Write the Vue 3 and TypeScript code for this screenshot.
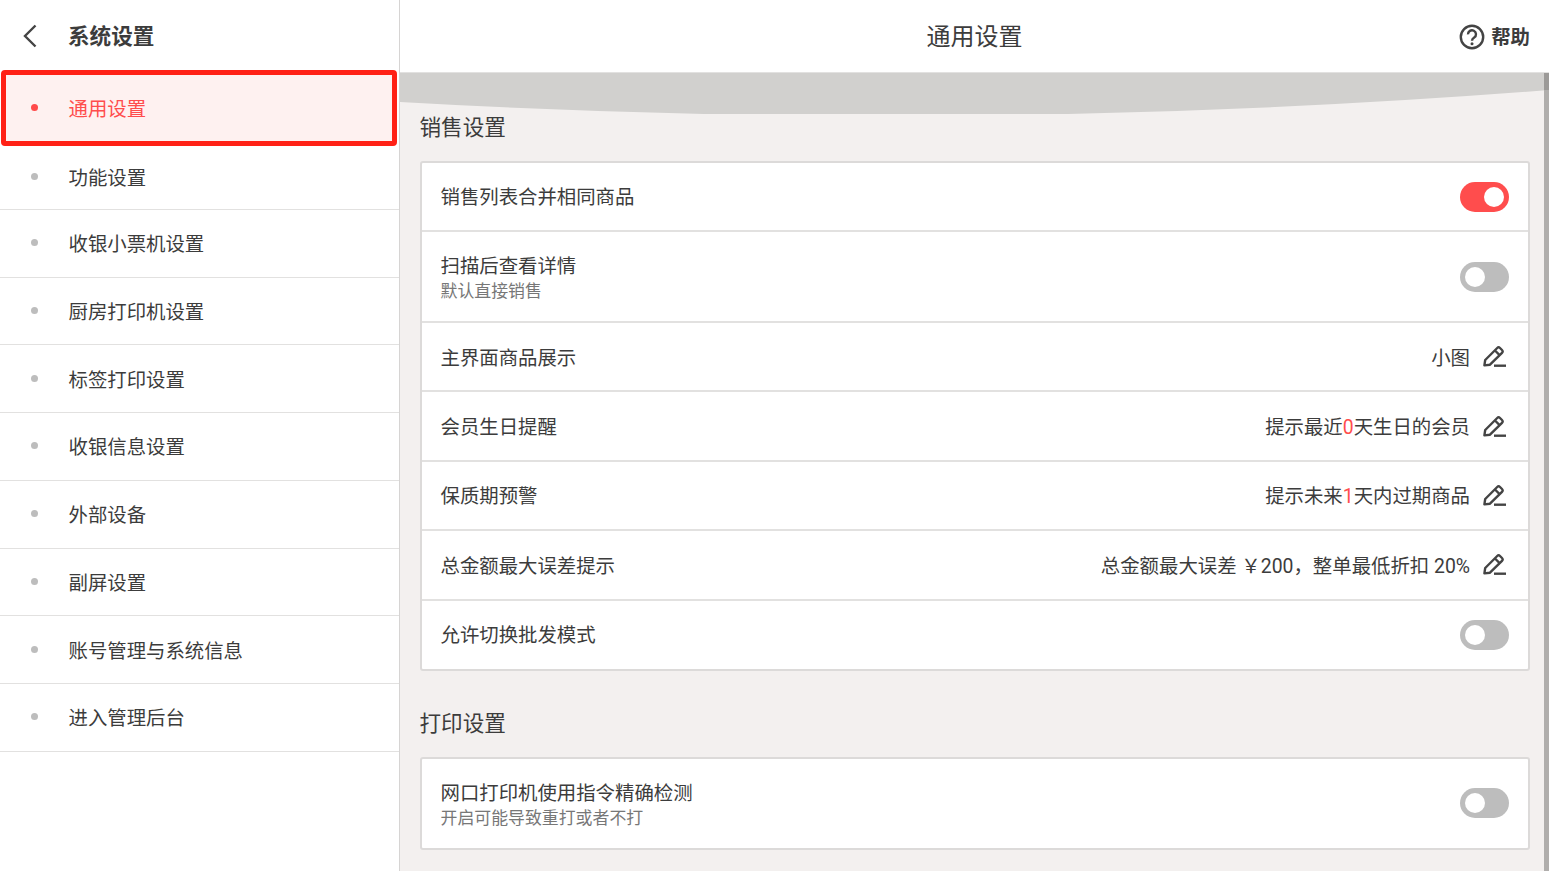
<script setup lang="ts">
interface NavItem { label: string; active?: boolean }
const nav: NavItem[] = [
  { label: '通用设置', active: true },
  { label: '功能设置' },
  { label: '收银小票机设置' },
  { label: '厨房打印机设置' },
  { label: '标签打印设置' },
  { label: '收银信息设置' },
  { label: '外部设备' },
  { label: '副屏设置' },
  { label: '账号管理与系统信息' },
  { label: '进入管理后台' },
]
</script>

<template>
  <div class="app">
    <aside class="side">
      <div class="side-head">
        <svg class="back" width="16" height="24" viewBox="0 0 16 24"><path d="M13.5 1.5 3 12l10.5 10.5" fill="none" stroke="#444" stroke-width="2.4"/></svg>
        <span class="side-title">系统设置</span>
      </div>
      <ul class="nav">
        <li v-for="n in nav" :key="n.label" class="nav-item" :class="{ active: n.active }">
          <i class="dot"></i><span>{{ n.label }}</span>
        </li>
      </ul>
    </aside>
    <main class="main">
      <header class="top">
        <span class="top-title">通用设置</span>
        <span class="help">
          <svg width="26" height="26" viewBox="0 0 26 26"><circle cx="13" cy="13" r="11.2" fill="none" stroke="#444" stroke-width="2.4"/><path d="M9 10.4a4 4 0 1 1 6.2 3.2c-1.5 1-2.2 1.7-2.2 3.2" fill="none" stroke="#444" stroke-width="2.4"/><circle cx="13" cy="19.7" r="1.5" fill="#444"/></svg>
          帮助
        </span>
      </header>
      <div class="body">
        <svg class="glow" viewBox="0 0 1149 41" preserveAspectRatio="none"><path d="M0 0H1149V17Q574 62 0 29Z" fill="#d1d0ce"/></svg>
        <i class="bar"></i>
        <h2 class="sec first">销售设置</h2>
        <section class="card">
          <div class="row first-row"><span>销售列表合并相同商品</span><i class="sw on"></i></div>
          <div class="row r91"><div><div>扫描后查看详情</div><div class="sub">默认直接销售</div></div><i class="sw"></i></div>
          <div class="row r69"><span>主界面商品展示</span><div class="val"><span>小图</span><svg class="pen" width="23" height="21" viewBox="0 0 23 21"><path d="M1.4 19.4 2.2 14 14.2 2a2 2 0 0 1 2.8 0l2 2a2 2 0 0 1 0 2.8L7 18.7Z M12 4.5l4.6 4.6" fill="none" stroke="#444" stroke-width="2.4" stroke-linejoin="round"/><path d="M11 19.7h12" stroke="#444" stroke-width="2.4"/></svg></div></div>
          <div class="row r69"><span>会员生日提醒</span><div class="val"><span>提示最近<em>0</em>天生日的会员</span><svg class="pen" width="23" height="21" viewBox="0 0 23 21"><path d="M1.4 19.4 2.2 14 14.2 2a2 2 0 0 1 2.8 0l2 2a2 2 0 0 1 0 2.8L7 18.7Z M12 4.5l4.6 4.6" fill="none" stroke="#444" stroke-width="2.4" stroke-linejoin="round"/><path d="M11 19.7h12" stroke="#444" stroke-width="2.4"/></svg></div></div>
          <div class="row r69"><span>保质期预警</span><div class="val"><span>提示未来<em>1</em>天内过期商品</span><svg class="pen" width="23" height="21" viewBox="0 0 23 21"><path d="M1.4 19.4 2.2 14 14.2 2a2 2 0 0 1 2.8 0l2 2a2 2 0 0 1 0 2.8L7 18.7Z M12 4.5l4.6 4.6" fill="none" stroke="#444" stroke-width="2.4" stroke-linejoin="round"/><path d="M11 19.7h12" stroke="#444" stroke-width="2.4"/></svg></div></div>
          <div class="row r70"><span>总金额最大误差提示</span><div class="val"><span>总金额最大误差 ￥200，整单最低折扣 20%</span><svg class="pen" width="23" height="21" viewBox="0 0 23 21"><path d="M1.4 19.4 2.2 14 14.2 2a2 2 0 0 1 2.8 0l2 2a2 2 0 0 1 0 2.8L7 18.7Z M12 4.5l4.6 4.6" fill="none" stroke="#444" stroke-width="2.4" stroke-linejoin="round"/><path d="M11 19.7h12" stroke="#444" stroke-width="2.4"/></svg></div></div>
          <div class="row last-row"><span>允许切换批发模式</span><i class="sw"></i></div>
        </section>
        <h2 class="sec second">打印设置</h2>
        <section class="card">
          <div class="row r90"><div><div>网口打印机使用指令精确检测</div><div class="sub">开启可能导致重打或者不打</div></div><i class="sw"></i></div>
        </section>
      </div>
    </main>
  </div>
</template>

<style>
html, body { margin: 0; height: 100%; overflow: hidden; }
</style>

<style scoped>
.app { display: flex; height: 871px; width: 1549px; overflow: hidden; background: #fff; color: #3c3c3c; font-family: Roboto, "Noto Sans CJK SC", "Noto Sans", sans-serif; }
.side { width: 400px; flex: none; box-sizing: border-box; border-right: 1px solid #d6d4d3; background: #fff; }
.side-head { height: 72px; box-sizing: border-box; display: flex; align-items: center; padding: 0 0 3px 22px; }
.back { flex: none; margin-top: 3px; }
.side-title { margin-left: 30px; font-size: 21.6px; font-weight: 700; color: #3c3c3c; }
.nav { list-style: none; margin: 0; padding: 0; }
.nav-item { height: 67.75px; box-sizing: border-box; display: flex; align-items: center; padding: 0 0 1px 31px; border-bottom: 1px solid #e2e1e0; font-size: 19.4px; }
.dot { width: 7px; height: 7px; border-radius: 50%; background: #bdbdbd; margin-right: 30.5px; }
.nav-item.active { height: 76px; margin: -2px 2px 0 1px; padding: 0 0 2px 25px; background: #fef1f0; color: #ff4d4d; border: 5px solid #ff2116; border-radius: 4px; }
.nav-item.active .dot { background: #ff4a4a; margin-right: 30.5px; }
.nav-item.active + .nav-item { height: 63.75px; padding-bottom: 2px; }
.main { flex: 1; min-width: 0; display: flex; flex-direction: column; }
.top { height: 73px; flex: none; display: flex; align-items: center; justify-content: center; position: relative; background: #fff; border-bottom: 1px solid #e2e1e0; box-sizing: border-box; padding-bottom: 3px; }
.top-title { font-size: 24px; color: #3c3c3c; }
.help { position: absolute; right: 19px; top: 21px; display: flex; align-items: center; gap: 6px; font-size: 19.4px; font-weight: 700; }
.help svg { margin-top: 2px; }
.body { flex: 1; position: relative; background: #f3f0ef; padding: 0 19px 0 20px; overflow: hidden; }
.glow { position: absolute; left: 0; top: 0; width: 100%; height: 41px; }
.bar { position: absolute; right: 0; top: 0; width: 5px; height: 100%; background: linear-gradient(#9c9a98 17px, #b0aeac 17px); }
.sec { position: relative; margin: 0 0 0 -0.5px; font-weight: 400; font-size: 21.6px; line-height: 32px; color: #3c3c3c; box-sizing: content-box; }
.sec.first { padding-top: 39px; height: 49px; }
.sec.second { padding-top: 37px; height: 48.6px; }
.card { background: #fff; border: 2px solid #dcdad9; border-radius: 3px; position: relative; box-sizing: border-box; }
.row { display: flex; align-items: center; justify-content: space-between; padding: 0 19px 0 18.5px; box-sizing: border-box; font-size: 19.4px; line-height: 26px; border-bottom: 2px solid #e2e1e0; }
.row > span, .row > div:first-child, .val > span { padding-top: 4px; }
.row:last-child { border-bottom: 0; }
.r69 { height: 69.4px; }
.r70 { height: 69.6px; }
.first-row { height: 69px; }
.first-row > span { padding-top: 2px; }
.last-row { height: 68.4px; }
.last-row > span { padding-top: 2px; }
.r90 { height: 89px; }
.r91 { height: 91px; }
.sub { font-size: 16.9px; line-height: 23px; color: #777; }
.val { display: flex; align-items: center; }
.val em { font-style: normal; color: #ff4d4d; }
.pen { margin: 0 3px 0 13px; }
.sw { display: block; width: 49px; height: 30px; border-radius: 15px; background: #bdbdbd; position: relative; flex: none; }
.sw::after { content: ""; position: absolute; left: 5px; top: 5px; width: 20px; height: 20px; border-radius: 50%; background: #fff; }
.sw.on { background: #ff4d4d; }
.sw.on::after { left: 24px; }
</style>
